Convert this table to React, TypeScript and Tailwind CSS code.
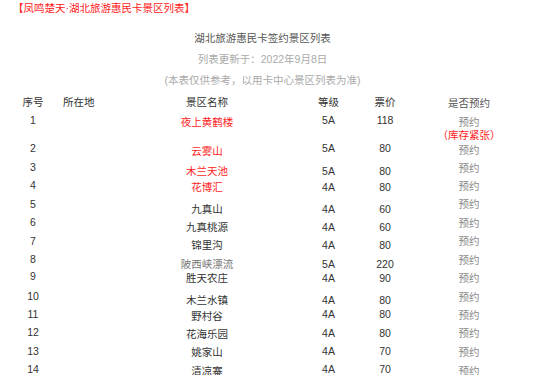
import React from "react";

// offsets in px from the row top, written out so Tailwind sees them
const pad: Record<number, string> = {
  0: "pt-0",
  1: "pt-px",
  2: "pt-[2px]",
  3: "pt-[3px]",
  4: "pt-1",
  5: "pt-[5px]",
};

interface Row {
  no: string;
  name: string;
  level: string;
  price: string;
  h: string;
  off: [number, number, number, number, number];
  tone: "red" | "dark" | "soft";
  note?: string;
}

const rows: Row[] = [
  { no: "1", name: "夜上黄鹤楼", level: "5A", price: "118", h: "h-[28px]", off: [0, 2, 0, 0, 2], tone: "red", note: "库存紧张" },
  { no: "2", name: "云雾山", level: "5A", price: "80", h: "h-[19px]", off: [0, 3, 0, 0, 2], tone: "red" },
  { no: "3", name: "木兰天池", level: "5A", price: "80", h: "h-[18px]", off: [0, 4, 4, 4, 1], tone: "red" },
  { no: "4", name: "花博汇", level: "4A", price: "80", h: "h-[19px]", off: [0, 2, 2, 2, 1], tone: "red" },
  { no: "5", name: "九真山", level: "4A", price: "60", h: "h-[18px]", off: [0, 5, 5, 5, 0], tone: "dark" },
  { no: "6", name: "九真桃源", level: "4A", price: "60", h: "h-[19px]", off: [0, 5, 5, 5, 1], tone: "dark" },
  { no: "7", name: "锦里沟", level: "4A", price: "80", h: "h-[18px]", off: [0, 4, 4, 4, 0], tone: "dark" },
  { no: "8", name: "陂西峡漂流", level: "5A", price: "220", h: "h-[17px]", off: [0, 5, 5, 5, 1], tone: "soft" },
  { no: "9", name: "胜天农庄", level: "4A", price: "90", h: "h-[20px]", off: [0, 2, 2, 2, 2], tone: "dark" },
  { no: "10", name: "木兰水镇", level: "4A", price: "80", h: "h-[18px]", off: [0, 4, 4, 4, 1], tone: "dark" },
  { no: "11", name: "野村谷", level: "4A", price: "80", h: "h-[18px]", off: [0, 2, 0, 0, 1], tone: "dark" },
  { no: "12", name: "花海乐园", level: "4A", price: "80", h: "h-[19px]", off: [0, 2, 1, 1, 1], tone: "dark" },
  { no: "13", name: "姚家山", level: "4A", price: "70", h: "h-[18px]", off: [0, 1, 0, 0, 1], tone: "dark" },
  { no: "14", name: "清凉寨", level: "4A", price: "70", h: "h-[18px]", off: [0, 2, 0, 0, 2], tone: "dark" },
];

const toneClass = {
  red: "text-[#ff1a1a]",
  dark: "text-[#333]",
  soft: "text-[#777]",
};

const cols = "grid grid-cols-[38px_108px_94px_103px_56px_112px]";

export default function App() {
  return (
    <div
      className="w-[540px] h-[375px] overflow-hidden bg-white text-[10.5px] leading-[14px] text-[#333]"
      style={{ fontFamily: '"Liberation Sans", "Noto Sans CJK SC", sans-serif' }}
    >
      <p className="pl-[13px] pt-px text-[#ff1a1a]">【凤鸣楚天·湖北旅游惠民卡景区列表】</p>

      <div className="w-[525px] text-center">
        <p className="mt-[16px] text-[#555]">湖北旅游惠民卡签约景区列表</p>
        <p className="mt-[7px] text-[#aaa]">列表更新于：2022年9月8日</p>
        <p className="mt-[7px] text-[#aaa]">(本表仅供参考，以用卡中心景区列表为准)</p>
      </div>

      <div className="mt-[8px] pl-[14px]">
        <div className={`${cols} h-[18px]`}>
          <div className="text-center">序号</div>
          <div className="pl-[11px]">所在地</div>
          <div className="text-center">景区名称</div>
          <div className="pl-[46px] text-center">等级</div>
          <div className="text-center">票价</div>
          <div className="pt-px text-center text-[#555]">是否预约</div>
        </div>

        {rows.map((r) => (
          <div key={r.no} className={`${cols} ${r.h}`}>
            <div className={`text-center ${pad[r.off[0]]}`}>{r.no}</div>
            <div />
            <div className={`text-center ${pad[r.off[1]]} ${toneClass[r.tone]}`}>{r.name}</div>
            <div className={`pl-[46px] text-center ${pad[r.off[2]]}`}>{r.level}</div>
            <div className={`text-center ${pad[r.off[3]]}`}>{r.price}</div>
            <div className={`text-center text-[#888] ${pad[r.off[4]]}`}>
              <div>预约</div>
              {r.note && <div className="-mt-px text-[#ff1a1a]">（{r.note}）</div>}
            </div>
          </div>
        ))}
      </div>
    </div>
  );
}
